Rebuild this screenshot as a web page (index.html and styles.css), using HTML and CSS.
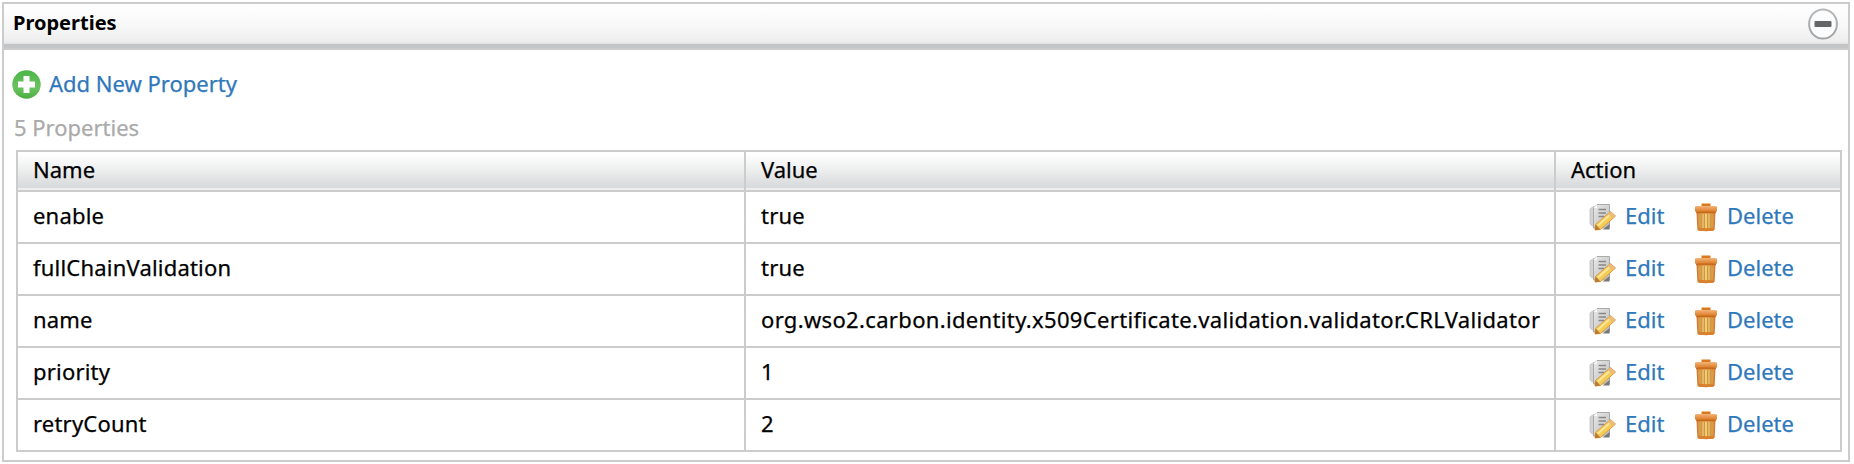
FILE: index.html
```html
<!DOCTYPE html>
<html lang="en">
<head>
<meta charset="utf-8">
<title>Properties</title>
<link rel="stylesheet" href="styles.css">
</head>
<body>
<svg class="defs" width="0" height="0" aria-hidden="true">
  <defs>
    <linearGradient id="green" x1="0" y1="0" x2="0" y2="1"><stop offset="0" stop-color="#4cb548"/><stop offset=".6" stop-color="#6cc360"/><stop offset="1" stop-color="#48ae43"/></linearGradient>
    <linearGradient id="lid" x1="0" y1="0" x2="0" y2="1"><stop offset="0" stop-color="#f3b47a"/><stop offset="1" stop-color="#d9741c"/></linearGradient>
    <linearGradient id="can" x1="0" y1="0" x2="1" y2="0"><stop offset="0" stop-color="#d68735"/><stop offset=".5" stop-color="#f3cf7c"/><stop offset="1" stop-color="#d68532"/></linearGradient>
    <linearGradient id="page" x1="0" y1="0" x2="1" y2="1"><stop offset="0" stop-color="#e9e9e9"/><stop offset="1" stop-color="#bdbdbd"/></linearGradient>
    <linearGradient id="ring" x1="0" y1="0" x2="0" y2="1"><stop offset="0" stop-color="#b8b8b8"/><stop offset="1" stop-color="#a2a2a2"/></linearGradient>
    <symbol id="edit" viewBox="0 0 28 28">
      <path d="M1 6 5 3V24L1 21Z" fill="#d2d2d2" stroke="#c0c0c0" stroke-width=".8"/>
      <path d="M8 1.5H20.5V25H4.5V5Z" fill="url(#page)" stroke="#aaa" stroke-width="1"/>
      <path d="M4.5 5 8 1.5V5Z" fill="#fafafa"/>
      <path d="M9.500 6.500H17M9.500 10H17M9.500 13.500H15" stroke="#888" stroke-width="1.3"/>
      <path d="M14 26.500H20.500V21Z" fill="#777"/>
      <path d="M6.500 21.500 21.500 8.500 26.500 13 11.500 26.500 6 27Z" fill="#f3cb55" stroke="#d99a43" stroke-width="1"/>
      <path d="M9 22.500 22.500 10.500" stroke="#fbe79c" stroke-width="2"/>
      <path d="M18.800 11 21.500 8.500 26.500 13 23.800 15.500Z" fill="#eaba7c"/>
      <path d="M6.500 21.500 11.500 26.500 6 27Z" fill="#b97832"/>
    </symbol>
    <symbol id="trash" viewBox="0 0 24 30">
      <path d="M3 11H21L20 28Q12 29.500 4 28Z" fill="url(#can)" stroke="#cd7528" stroke-width="1"/>
      <path d="M7.200 12V27M10.400 12V27.500M13.600 12V27.500M16.800 12V27" stroke="#c4933c" stroke-width="1"/>
      <path d="M4.500 25.500Q12 27 19.500 25.500L19.300 28.500Q12 29.700 4.700 28.500Z" fill="#d9802d"/>
      <path d="M7.500 5V1.500H16.500V5Z" fill="#d9781f"/>
      <path d="M1 5Q1 4 3 4H21Q23 4 23 5V9.500Q12 11.500 1 9.500Z" fill="url(#lid)"/>
      <path d="M2 9.500H22V11H2Z" fill="#c96b1c"/>
    </symbol>
  </defs>
</svg>
<section class="panel">
  <header class="panel-header">
    <h2 class="panel-title">Properties</h2>
    <svg class="collapse" viewBox="0 0 30 32"><ellipse cx="15" cy="16" rx="13.900" ry="14.600" fill="#fafcfe" stroke="url(#ring)" stroke-width="2"/><rect x="6.500" y="13" width="17" height="6" rx="1" fill="#666"/></svg>
  </header>
  <div class="panel-body">
    <a class="add"><svg class="add-icon" viewBox="0 0 29 29"><circle cx="14.500" cy="14.500" r="14.200" fill="url(#green)"/><path d="M11.500 6H17.500V11.500H23V17.500H17.500V23H11.500V17.500H6V11.500H11.500Z" fill="#fff"/></svg><span class="add-label">Add New Property</span></a>
    <p class="count">5 Properties</p>
    <table class="grid">
      <colgroup><col class="col-name"><col class="col-value"><col class="col-action"></colgroup>
      <thead><tr><th>Name</th><th>Value</th><th>Action</th></tr></thead>
      <tbody>
        <tr><td>enable</td><td>true</td><td><div class="actions"><a class="edit"><svg class="edit-icon"><use href="#edit"/></svg><span>Edit</span></a><a class="delete"><svg class="trash-icon"><use href="#trash"/></svg><span>Delete</span></a></div></td></tr>
        <tr><td>fullChainValidation</td><td>true</td><td><div class="actions"><a class="edit"><svg class="edit-icon"><use href="#edit"/></svg><span>Edit</span></a><a class="delete"><svg class="trash-icon"><use href="#trash"/></svg><span>Delete</span></a></div></td></tr>
        <tr><td>name</td><td><span class="class-name">org.wso2.carbon.identity.x509Certificate.validation.validator.CRLValidator</span></td><td><div class="actions"><a class="edit"><svg class="edit-icon"><use href="#edit"/></svg><span>Edit</span></a><a class="delete"><svg class="trash-icon"><use href="#trash"/></svg><span>Delete</span></a></div></td></tr>
        <tr><td>priority</td><td>1</td><td><div class="actions"><a class="edit"><svg class="edit-icon"><use href="#edit"/></svg><span>Edit</span></a><a class="delete"><svg class="trash-icon"><use href="#trash"/></svg><span>Delete</span></a></div></td></tr>
        <tr><td>retryCount</td><td>2</td><td><div class="actions"><a class="edit"><svg class="edit-icon"><use href="#edit"/></svg><span>Edit</span></a><a class="delete"><svg class="trash-icon"><use href="#trash"/></svg><span>Delete</span></a></div></td></tr>
      </tbody>
    </table>
  </div>
</section>
</body>
</html>
```
FILE: styles.css
```css
* { box-sizing: border-box; }
body {
  margin: 0;
  padding: 2px 4px 2px 2px;
  background: #fff;
  color: #000;
  font: 22px/30px "Noto Sans", "Open Sans", sans-serif;
  -webkit-text-stroke: .25px currentColor;
}
.defs { position: absolute; width: 0; height: 0; }
.panel { height: 460px; border: 2px solid #ccc; }
.panel-header {
  display: flex;
  align-items: center;
  justify-content: space-between;
  height: 46px;
  padding: 0 10px 6px 9px;
  background: linear-gradient(#fff 0, #f7f7f7 50%, #ededed 82%, #e2e2e2 86%, #c1c3c4 87%, #c4c6c8 95%, #ccc 96%);
}
.panel-title { margin: -3px 0 0; font-size: 20px; font-weight: 700; line-height: 30px; -webkit-text-stroke: 0; }
.collapse { width: 30px; height: 32px; }
.panel-body { padding: 19px 7px 0 8px; }
.add { display: flex; align-items: center; gap: 8px; height: 31px; color: #2f78bb; }
.add-icon { width: 29px; height: 29px; }
.add-label { margin-top: -4px; }
.count { margin: 12px 0 8px 2px; color: #aaa; }
.grid { width: 1826px; margin-left: 4px; border-collapse: collapse; table-layout: fixed; }
.col-name { width: 728px; }
.col-value { width: 810px; }
.col-action { width: 286px; }
.grid th, .grid td {
  height: 52px;
  padding: 0 14px 4px 15px;
  border: 2px solid #ccc;
  font-weight: 400;
  text-align: left;
  white-space: nowrap;
}
.grid td { letter-spacing: .2px; }
.grid th {
  height: 40px;
  padding-bottom: 4px;
  line-height: 30px;
  background: linear-gradient(#fff 2px, #eceded 50%, #d8dadc 90%, #d8dadc 95%, #eee 96%);
}
.grid .class-name { letter-spacing: .34px; }
.actions { display: flex; align-items: center; padding-left: 18px; letter-spacing: 0; }
.edit, .delete { display: flex; align-items: center; color: #2f78bb; }
.edit { width: 105px; gap: 8px; }
.delete { gap: 9px; }
.edit-icon { width: 28px; height: 28px; margin-top: 4px; }
.trash-icon { width: 24px; height: 30px; margin-top: 3px; }
```
